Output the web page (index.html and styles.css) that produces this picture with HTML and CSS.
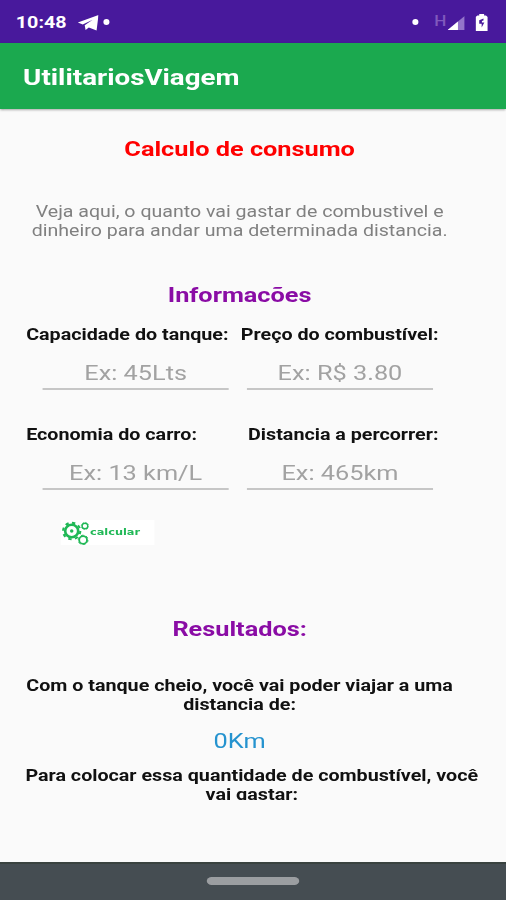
FILE: index.html
```
<!DOCTYPE html>
<html lang="pt-br">
<head>
<meta charset="utf-8">
<title>UtilitariosViagem</title>
<link rel="stylesheet" href="styles.css">
</head>
<body>
<div class="screen">
	<div class="status">
		<span class="clock">10:48</span>
		<svg class="plane" width="17" height="16" viewBox="0 0 16 16" preserveAspectRatio="none"><path d="M0 7.5L16 0L14.5 15.5L8.5 12.5L6 15L5.3 10.2L11.5 4.8L3.8 9.5Z" fill="#fff"/></svg>
		<i class="dot"></i>
		<div class="status-right">
			<i class="dot"></i>
			<span class="net">H</span>
			<svg class="signal" width="14" height="14" viewBox="0 0 14 14"><path d="M0 14L14 0V14Z" fill="#9475ca"/><path d="M0 14L8.5 5.5V14Z" fill="#fff"/></svg>
			<svg class="battery" width="10" height="17" viewBox="0 0 10 17"><path d="M3 0H7V1.5H8.5L10 3V17H0V3L1.5 1.5H3Z" fill="#fff"/><path d="M6.5 4.5L3 6.2V9.8H5V13.5L7.2 8.5H5.2V7L6.5 6.6Z" fill="#48199c"/></svg>
		</div>
	</div>
	<div class="toolbar">UtilitariosViagem</div>
	<div class="content">
		<h1 class="title">Calculo de consumo</h1>
		<p class="desc">Veja aqui, o quanto vai gastar de combustivel e<br>dinheiro para andar uma determinada distancia.</p>
		<h2 class="info-title">Informacões</h2>
		<div class="labels">
			<label for="tanque">Capacidade do tanque:</label>
			<label for="preco">Preço do combustível:</label>
		</div>
		<div class="inputs">
			<input id="tanque" type="text" placeholder="Ex: 45Lts">
			<input id="preco" type="text" placeholder="Ex: R$ 3.80">
		</div>
		<div class="labels second">
			<label for="economia">Economia do carro:</label>
			<label for="distancia">Distancia a percorrer:</label>
		</div>
		<div class="inputs">
			<input id="economia" type="text" placeholder="Ex: 13 km/L">
			<input id="distancia" type="text" placeholder="Ex: 465km">
		</div>
		<button class="calc" type="button">
			<svg width="23" height="24" viewBox="0 0 27 24" preserveAspectRatio="none" fill="none" stroke="#20b856">
				<circle cx="10.5" cy="10" r="6.3" stroke-width="2.6"/>
				<circle cx="10.5" cy="10" r="8.3" stroke-width="2" stroke-dasharray="3.26 3.26"/>
				<circle cx="10.5" cy="10" r="1.7" fill="#20b856" stroke="none"/>
				<circle cx="23.3" cy="5" r="2.8" stroke-width="1.4"/>
				<circle cx="23.3" cy="5" r="3.6" stroke-width="0.6" stroke-dasharray="1.4 1.4"/>
				<circle cx="21.5" cy="19" r="3.8" stroke-width="1.8"/>
				<circle cx="21.5" cy="19" r="4.8" stroke-width="0.9" stroke-dasharray="2.5 2.5"/>
			</svg>
			<span>calcular</span>
		</button>
		<h2 class="result-title">Resultados:</h2>
		<p class="result">Com o tanque cheio, você vai poder viajar a uma<br>distancia de:</p>
		<p class="value">0Km</p>
		<p class="result cost">Para colocar essa quantidade de combustível, você<br>vai gastar:</p>
	</div>
	<div class="nav"><i class="handle"></i></div>
</div>
</body>
</html>
```
FILE: styles.css
```
body{
	margin: 0;
	overflow: hidden;
	background-color: #fafafa;
	font-family: Roboto, sans-serif;
}
.screen{
	display: flex;
	flex-direction: column;
	width: 416px;
	height: 900px;
	transform: scaleX(1.21635);
	transform-origin: 0 0;
	background-color: #fafafa;
}
h1, h2, p{
	margin: 0;
}
.status{
	display: flex;
	align-items: center;
	box-sizing: border-box;
	height: 43px;
	padding: 2px 15px 0 13px;
	background-color: #48199c;
	color: #fff;
}
.clock{
	width: 51px;
	font-size: 16.2px;
	font-weight: bold;
}
.dot{
	width: 5px;
	height: 6px;
	margin: -1px 0 0 4px;
	border-radius: 50%;
	background-color: #fff;
}
.status-right{
	display: flex;
	align-items: center;
	margin-left: auto;
}
.net{
	margin: -4px 1px 0 13px;
	font-size: 14px;
	font-weight: 500;
	line-height: 14px;
	color: #8059bd;
}
.signal{
	margin-top: 1px;
}
.battery{
	margin-left: 9px;
	margin-top: -1px;
}
.toolbar{
	height: 66px;
	padding-left: 19px;
	background-color: #1ba94f;
	box-shadow: 0 1px 2px rgba(0,0,0,.35);
	color: #fff;
	font-size: 22.8px;
	font-weight: bold;
	line-height: 70px;
}
.content{
	width: 394px;
	height: 753px;
	text-align: center;
}
.title, .info-title, .result-title{
	font-size: 20.8px;
	font-weight: bold;
	line-height: 26px;
}
.title{
	padding-top: 27px;
	color: #f00;
}
.desc{
	margin-top: 40px;
	font-size: 16.1px;
	line-height: 19.3px;
	color: #808080;
}
.info-title{
	margin-top: 41px;
	color: #8a0ca5;
}
.labels{
	display: flex;
	justify-content: space-between;
	margin-top: 17px;
	padding: 0 33.5px 0 21.5px;
	font-size: 16.2px;
	font-weight: bold;
	line-height: 19.3px;
	color: #111;
}
.second{
	margin-top: 35px;
}
.inputs{
	display: flex;
	gap: 15px;
	margin-top: 15px;
	padding-left: 35px;
}
.inputs input{
	box-sizing: border-box;
	width: 153px;
	height: 31px;
	padding: 1px 0 2px;
	border: 0;
	border-bottom: 2px solid #c6c6c6;
	background: none;
	font-family: inherit;
	font-size: 20.8px;
	line-height: 26px;
	text-align: center;
}
.inputs input::placeholder{
	color: #a2a2a2;
	opacity: 1;
}
.calc{
	display: flex;
	align-items: center;
	width: 77px;
	height: 25px;
	margin: 30px 0 0 50px;
	padding: 0;
	border: 0;
	background-color: #fff;
	color: #20b856;
	font-family: "DejaVu Sans", sans-serif;
	font-size: 9.3px;
	font-weight: bold;
}
.calc span{
	margin: -3px 0 0 1px;
}
.result-title{
	margin-top: 71px;
	color: #8a0ca5;
}
.result{
	margin-top: 34px;
	font-size: 16.2px;
	font-weight: bold;
	line-height: 19.3px;
	color: #111;
}
.value{
	margin-top: 13px;
	font-size: 20.8px;
	line-height: 26px;
	color: #2593cf;
}
.cost{
	height: 34px;
	margin: 12px -6px 0 14px;
	overflow: hidden;
}
.nav{
	display: flex;
	justify-content: center;
	box-sizing: border-box;
	height: 38px;
	padding-top: 13px;
	border-top: 2px solid #39423f;
	background-color: #454d52;
}
.handle{
	width: 76px;
	height: 8px;
	border-radius: 4px;
	background-color: #9b9ea1;
}
```
